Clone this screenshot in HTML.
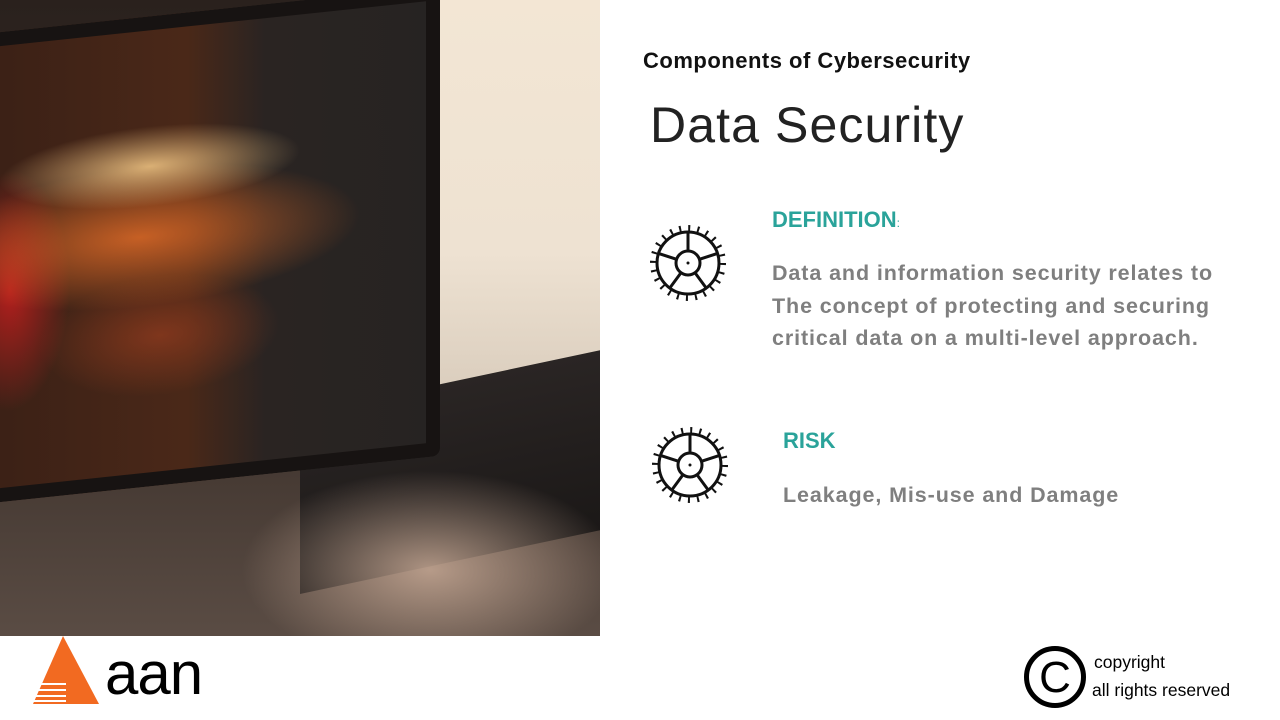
<!DOCTYPE html>
<html><head><meta charset="utf-8"><style>
body{margin:0;width:1280px;height:720px;overflow:hidden;background:#fff;font-family:"Liberation Sans",sans-serif;position:relative}
.photo{position:absolute;left:0;top:0;width:600px;height:636px;overflow:hidden;background:linear-gradient(180deg,#2a211d 0%,#3b302a 60%,#5a4c44 100%)}
.lightR{position:absolute;left:420px;top:0;width:180px;height:420px;background:linear-gradient(180deg,#f3e6d4,#eee2d2 60%,#d6c9b9);}
.screen{position:absolute;left:-20px;top:10px;width:460px;height:470px;transform:skewY(-6deg);border-radius:8px;background:
radial-gradient(ellipse 150px 40px at 170px 150px,rgba(255,210,140,.8),rgba(255,210,140,0)),
radial-gradient(ellipse 220px 70px at 160px 220px,rgba(230,110,40,.8),rgba(230,110,40,0)),
radial-gradient(ellipse 60px 120px at 30px 260px,rgba(200,30,30,.85),rgba(200,30,30,0)),
radial-gradient(ellipse 120px 60px at 180px 320px,rgba(150,60,30,.7),rgba(150,60,30,0)),
linear-gradient(90deg,#3a2016 0%,#4a2818 45%,#2a2422 62%,#262322 100%);
box-shadow:inset 0 0 0 14px #171312}
.kb{position:absolute;left:300px;top:380px;width:320px;height:180px;transform:skewY(-12deg);background:linear-gradient(180deg,#2a2524,#1b1817);}
.hand{position:absolute;left:240px;top:470px;width:380px;height:200px;border-radius:50%;background:radial-gradient(ellipse at center,rgba(200,170,150,.85),rgba(200,170,150,0) 70%)}
h1{position:absolute;left:643px;top:48px;margin:0;font-size:22px;font-weight:bold;color:#111;letter-spacing:0.5px}
h2{position:absolute;left:650px;top:96px;margin:0;font-size:50px;font-weight:normal;color:#222;letter-spacing:1.1px}
.t{position:absolute;font-weight:bold;color:#2aa39a;font-size:22px}
.p{position:absolute;font-weight:bold;color:#7f7f7f;font-size:21.5px;line-height:32.5px;letter-spacing:0.9px}
svg{position:absolute}
</style></head><body>
<div class="photo"><div class="lightR"></div><div class="kb"></div><div class="screen"></div><div class="hand"></div></div>
<h1>Components of Cybersecurity</h1>
<h2>Data Security</h2>
<svg style="left:648px;top:223px" width="80" height="80" viewBox="0 0 80 80">
<g fill="none" stroke="#111">
<circle cx="40" cy="40" r="34.5" stroke-width="7" stroke-dasharray="2 7.03"/>
<circle cx="40" cy="40" r="31" stroke-width="3"/>
<circle cx="40" cy="40" r="12" stroke-width="3"/>
<path d="M40 28V9M51.4 36.3L69.5 30.4M47 49.7L58.2 65M33 49.7L21.8 65M28.6 36.3L10.5 30.4" stroke-width="3"/>
</g><circle cx="40" cy="40" r="1.5" fill="#111"/></svg>
<svg style="left:650px;top:425px" width="80" height="80" viewBox="0 0 80 80">
<g fill="none" stroke="#111">
<circle cx="40" cy="40" r="34.5" stroke-width="7" stroke-dasharray="2 7.03"/>
<circle cx="40" cy="40" r="31" stroke-width="3"/>
<circle cx="40" cy="40" r="12" stroke-width="3"/>
<path d="M40 28V9M51.4 36.3L69.5 30.4M47 49.7L58.2 65M33 49.7L21.8 65M28.6 36.3L10.5 30.4" stroke-width="3"/>
</g><circle cx="40" cy="40" r="1.5" fill="#111"/></svg>
<div class="t" style="left:772px;top:207px">DEFINITION<span style="font-size:12px;font-weight:normal">:</span></div>
<div class="p" style="left:772px;top:257px">Data and information security relates to<br>The concept of protecting and securing<br>critical data on a multi-level approach.</div>
<div class="t" style="left:783px;top:428px">RISK</div>
<div class="p" style="left:783px;top:479px">Leakage, Mis-use and Damage</div>
<svg style="left:30px;top:634px" width="72" height="72" viewBox="0 0 72 72">
<polygon points="33,2 69,70 3,70" fill="#f26a21"/>
<g stroke="#fff" stroke-width="2"><path d="M0 50H36M0 56H36M0 62H36M0 67H36"/></g>
</svg>
<div style="position:absolute;left:105px;top:636px;font-size:60px;color:#000;letter-spacing:-1px;line-height:76px">aan</div>
<svg style="left:1023px;top:645px" width="64" height="64" viewBox="0 0 64 64">
<circle cx="32" cy="32" r="28.5" fill="none" stroke="#000" stroke-width="5"/>
<text x="32" y="47" text-anchor="middle" font-family="Liberation Sans" font-size="44" fill="#000">C</text>
</svg>
<div style="position:absolute;left:1094px;top:648px;font-size:17.5px;color:#000;line-height:28px">copyright<br><span style="margin-left:-2px">all rights reserved</span></div>
</body></html>
